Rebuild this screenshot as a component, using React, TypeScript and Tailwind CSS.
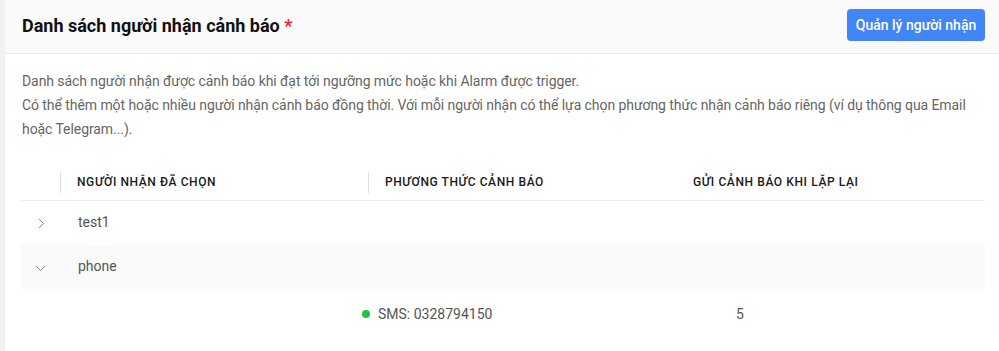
const recipients = [
    { id: 1, name: "test1", open: false },
    { id: 2, name: "phone", open: true },
];

const Chevron = ({ open }: { open: boolean }) =>
    open ? (
        <svg width="11" height="7" viewBox="0 0 11 7" fill="none">
            <path d="M1 1l4.5 4.5L10 1" stroke="#8c8c8c" strokeWidth="1" />
        </svg>
    ) : (
        <svg width="7" height="11" viewBox="0 0 7 11" fill="none">
            <path d="M1 1l4.5 4.5L1 10" stroke="#8c8c8c" strokeWidth="1" />
        </svg>
    );

export default function App() {
    return (
        <div className="flex w-[999px] h-[351px] bg-white font-['Roboto',sans-serif] overflow-hidden">
            <div className="w-[5px] shrink-0 bg-[#f2f2f2]" />
            <div className="flex-1 flex flex-col">
                {/* header */}
                <div className="h-[54px] shrink-0 flex items-center justify-between pl-[17px] pr-[14px] bg-[#fafafa] border-b border-[#e8e8e8]">
                    <h2 className="text-[18px] font-bold text-[#111] leading-none -mt-[2px]">
                        Danh sách người nhận cảnh báo <span className="text-[#f5222d]">*</span>
                    </h2>
                    <button className="h-[32px] w-[138px] -mt-[3px] rounded-[4px] bg-[#4285f4] text-white text-[14px] font-medium">
                        Quản lý người nhận
                    </button>
                </div>

                {/* body */}
                <div className="pl-[16px] pr-[14px] pt-[15px]">
                    <p className="pl-px text-[14px] leading-[24px] text-[#666] tracking-[-0.005em]">
                        Danh sách người nhận được cảnh báo khi đạt tới ngưỡng mức hoặc khi Alarm được trigger.
                        <br />
                        Có thể thêm một hoặc nhiều người nhận cảnh báo đồng thời. Với mỗi người nhận có thể lựa chọn phương thức nhận cảnh báo riêng (ví dụ thông qua Email hoặc Telegram...).
                    </p>

                    <div className="mt-[23px]">
                        <div className="grid grid-cols-[40px_308px_308px_1fr] h-[37px] items-center border-b border-[#ececec] text-[12px] font-medium tracking-[0.05em] text-[#1a1a1a]">
                            <div className="h-[22px] border-r border-[#e0e0e0]" />
                            <div className="h-[22px] flex items-center pl-[16px] border-r border-[#e0e0e0]">NGƯỜI NHẬN ĐÃ CHỌN</div>
                            <div className="pl-[16px]">PHƯƠNG THỨC CẢNH BÁO</div>
                            <div className="pl-[16px]">GỬI CẢNH BÁO KHI LẶP LẠI</div>
                        </div>

                        {recipients.map((r) => (
                            <div key={r.id}>
                                <div className={`grid grid-cols-[40px_1fr] h-[44px] items-center text-[14px] text-[#555] ${r.open ? 'bg-[#fafafa]' : ''}`}>
                                    <div className={`flex justify-center ${r.open ? 'pt-[3px] pr-px' : 'pl-px'}`}>
                                        <Chevron open={r.open} />
                                    </div>
                                    <div className="pl-[17px] -mt-[2px]">{r.name}</div>
                                </div>
                                {r.open && (
                                    <div className="flex items-center h-[50px] text-[14px] text-[#555]">
                                        <div className="w-[341px]" />
                                        <div className="w-[374px] flex items-center">
                                            <span className="w-[8px] h-[8px] rounded-full bg-[#1fc23a]" />
                                            <span className="ml-[8px]">SMS: 0328794150</span>
                                        </div>
                                        <div>5</div>
                                    </div>
                                )}
                            </div>
                        ))}
                    </div>
                </div>
            </div>
        </div>
    );
}
